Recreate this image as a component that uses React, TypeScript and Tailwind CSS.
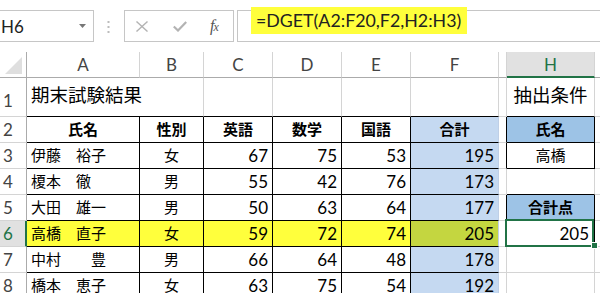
import React from "react";

const COLS = "grid-cols-[27px_113px_64px_69px_69px_69px_88px_8px_88px_1fr]";
const ROWS = "grid-rows-[26px_39px_26px_26px_26px_26px_26px_26px_26px]";

const GRID = "border-r border-b border-[#d4d4d4]";
const BLACK = "border-r border-b border-black";
const BOTTOM_BLACK = "border-r border-b border-r-[#d4d4d4] border-b-black";

type Row = { name: string; sex: string; en: number; ma: number; ja: number; total: number };

const data: Row[] = [
  { name: "伊藤　裕子", sex: "女", en: 67, ma: 75, ja: 53, total: 195 },
  { name: "榎本　徹", sex: "男", en: 55, ma: 42, ja: 76, total: 173 },
  { name: "大田　雄一", sex: "男", en: 50, ma: 63, ja: 64, total: 177 },
  { name: "高橋　直子", sex: "女", en: 59, ma: 72, ja: 74, total: 205 },
  { name: "中村　　豊", sex: "男", en: 66, ma: 64, ja: 48, total: 178 },
  { name: "橋本　恵子", sex: "女", en: 63, ma: 75, ja: 54, total: 192 },
];

function Toolbar() {
  return (
    <div className="h-[52px] flex items-start pt-[10px]">
      <div className="w-[94px] h-[32px] border-y border-r border-[#c6c6c6] flex items-center justify-between pl-[1px] pr-[7px]">
        <span className="text-[17px] text-[#222] leading-none">H6</span>
        <svg width="7" height="4" viewBox="0 0 7 4">
          <polygon points="0,0 7,0 3.5,4" fill="#777" />
        </svg>
      </div>
      <div className="ml-[13px] h-[32px] flex items-start pt-[11px]">
        <svg width="3" height="13" viewBox="0 0 3 13">
          <rect x="0.5" y="0" width="2" height="2" fill="#bcbcbc" />
          <rect x="0.5" y="5" width="2" height="2" fill="#bcbcbc" />
          <rect x="0.5" y="10" width="2" height="2" fill="#bcbcbc" />
        </svg>
      </div>
      <div className="ml-[14px] w-[110px] h-[32px] border border-[#c6c6c6] flex items-center">
        <svg className="ml-[11px]" width="12" height="11" viewBox="0 0 12 11">
          <line x1="0.5" y1="0.5" x2="11.5" y2="10.5" stroke="#b3b3b3" strokeWidth="1.4" />
          <line x1="11.5" y1="0.5" x2="0.5" y2="10.5" stroke="#b3b3b3" strokeWidth="1.4" />
        </svg>
        <svg className="ml-[25px]" width="14" height="11" viewBox="0 0 14 11">
          <polyline points="0.8,5.5 5,9.5 13.2,1" fill="none" stroke="#b3b3b3" strokeWidth="2.2" />
        </svg>
        <span className="ml-[23px] font-['Liberation_Serif',serif] italic text-[#555] leading-none flex items-end">
          <span className="text-[16px]">f</span>
          <span className="text-[12px] ml-[-1px] mb-[1px]">x</span>
        </span>
      </div>
      <div className="ml-[3px] flex-1 h-[32px] border-y border-l border-[#c6c6c6] flex items-start">
        <div className="ml-[13px] mt-[-4px] w-[216px] h-[27px] bg-[#ffff3c] flex items-center pl-[5px]">
          <span className="text-[17.8px] text-[#222] leading-none whitespace-nowrap">=DGET(A2:F20,F2,H2:H3)</span>
        </div>
      </div>
    </div>
  );
}

function RowHeader({ n, selected }: { n: number; selected?: boolean }) {
  if (selected) {
    return (
      <div className="flex items-center pl-[3px] text-[17px] leading-none bg-[#e1e1e1] text-[#217346] border-b border-b-[#d4d4d4] border-r-2 border-r-[#217346]">
        {n}
      </div>
    );
  }
  return (
    <div className="flex items-center pl-[3px] text-[17px] leading-none text-[#444] border-r border-b border-r-[#ababab] border-b-[#d4d4d4]">
      {n}
    </div>
  );
}

function ColHeader({ label }: { label: string }) {
  return (
    <div className="flex items-center justify-center text-[17px] leading-none text-[#444] border-r border-b border-r-[#d4d4d4] border-b-[#ababab]">
      {label}
    </div>
  );
}

export default function App() {
  return (
    <div className="w-[600px] h-[293px] overflow-hidden bg-white font-['Lato','Noto_Sans_CJK_JP',sans-serif] text-black">
      <Toolbar />
      <div className={`grid ${COLS} ${ROWS}`}>
        {/* Header row */}
        <div className="relative border-r border-b border-r-[#ababab] border-b-[#ababab]">
          <svg className="absolute left-0 top-0" width="26" height="25" viewBox="0 0 26 25">
            <polygon points="5,22 22,5 22,22" fill="#dfdfdf" />
          </svg>
        </div>
        <ColHeader label="A" />
        <ColHeader label="B" />
        <ColHeader label="C" />
        <ColHeader label="D" />
        <ColHeader label="E" />
        <ColHeader label="F" />
        <ColHeader label="" />
        <div className="flex items-center justify-center text-[17px] leading-none bg-[#e1e1e1] text-[#217346] border-r border-r-[#d4d4d4] border-b-2 border-b-[#217346]">
          H
        </div>
        <div className="border-b border-b-[#ababab]" />

        {/* Row 1 */}
        <div className="flex items-end pb-[7px] pl-[3px] text-[17px] leading-none text-[#444] border-r border-b border-r-[#ababab] border-b-[#d4d4d4]">
          1
        </div>
        <div className="flex items-center pb-[3px] pl-[4px] text-[18.5px] leading-none whitespace-nowrap overflow-visible border-b border-b-black">
          期末試験結果
        </div>
        <div className={BOTTOM_BLACK} />
        <div className={BOTTOM_BLACK} />
        <div className={BOTTOM_BLACK} />
        <div className={BOTTOM_BLACK} />
        <div className={BOTTOM_BLACK} />
        <div className={GRID} />
        <div className={`${BOTTOM_BLACK} flex items-center justify-center pb-[3px] text-[18.5px] leading-none`}>
          抽出条件
        </div>
        <div className="border-b border-b-[#d4d4d4]" />

        {/* Row 2 */}
        <RowHeader n={2} />
        <div className={`${BLACK} flex items-center justify-center text-[15px] font-bold leading-none`}>氏名</div>
        <div className={`${BLACK} flex items-center justify-center text-[15px] font-bold leading-none`}>性別</div>
        <div className={`${BLACK} flex items-center justify-center text-[15px] font-bold leading-none`}>英語</div>
        <div className={`${BLACK} flex items-center justify-center text-[15px] font-bold leading-none`}>数学</div>
        <div className={`${BLACK} flex items-center justify-center text-[15px] font-bold leading-none`}>国語</div>
        <div className="border-r border-b border-r-[#bfcfe6] border-b-black bg-[#c5d9f1] flex items-center justify-center text-[15px] font-bold leading-none">
          合計
        </div>
        <div className="border-r border-b border-r-black border-b-[#d4d4d4]" />
        <div className={`${BLACK} bg-[#9dc3e6] flex items-center justify-center text-[15px] font-bold leading-none`}>氏名</div>
        <div className="border-b border-b-[#d4d4d4]" />

        {/* Data rows 3-8 */}
        {data.map((r, i) => {
          const rowNum = i + 3;
          const sel = rowNum === 6;
          const yellow = sel ? "bg-[#ffff3c]" : "";
          const fBg = sel ? "bg-[#c4d640]" : "bg-[#c5d9f1]";
          return (
            <React.Fragment key={rowNum}>
              <RowHeader n={rowNum} selected={sel} />
              <div className={`${BLACK} ${yellow} flex items-center pl-[4px] text-[15px] leading-none whitespace-pre`}>
                {r.name}
              </div>
              <div className={`${BLACK} ${yellow} flex items-center justify-center text-[15px] leading-none`}>
                {r.sex}
              </div>
              <div className={`${BLACK} ${yellow} flex items-center justify-end pr-[4px] text-[17px] leading-none`}>
                {r.en}
              </div>
              <div className={`${BLACK} ${yellow} flex items-center justify-end pr-[4px] text-[17px] leading-none`}>
                {r.ma}
              </div>
              <div className={`${BLACK} ${yellow} flex items-center justify-end pr-[4px] text-[17px] leading-none`}>
                {r.ja}
              </div>
              <div className={`border-r border-b border-r-[#bfcfe6] border-b-black ${fBg} flex items-center justify-end pr-[4px] text-[17px] leading-none`}>
                {r.total}
              </div>
              {rowNum === 3 || rowNum === 5 ? (
                <div className="border-r border-b border-r-black border-b-[#d4d4d4]" />
              ) : (
                <div className={GRID} />
              )}
              {rowNum === 3 && (
                <div className={`${BLACK} flex items-center justify-center text-[15px] leading-none`}>高橋</div>
              )}
              {rowNum === 4 && <div className={BOTTOM_BLACK} />}
              {rowNum === 5 && (
                <div className={`${BLACK} bg-[#9dc3e6] flex items-center justify-center text-[15px] font-bold leading-none`}>
                  合計点
                </div>
              )}
              {rowNum === 6 && (
                <div className={`${BLACK} relative flex items-center justify-end pr-[5px] text-[17px] leading-none`}>
                  205
                  <div className="absolute left-[-2px] top-[-2px] w-[89px] h-[28px] border-2 border-[#217346]" />
                  <div className="absolute left-[84px] top-[21px] w-[7px] h-[7px] bg-[#217346] border border-white" />
                </div>
              )}
              {rowNum >= 7 && <div className={GRID} />}
              <div className="border-b border-b-[#d4d4d4]" />
            </React.Fragment>
          );
        })}
      </div>
    </div>
  );
}
